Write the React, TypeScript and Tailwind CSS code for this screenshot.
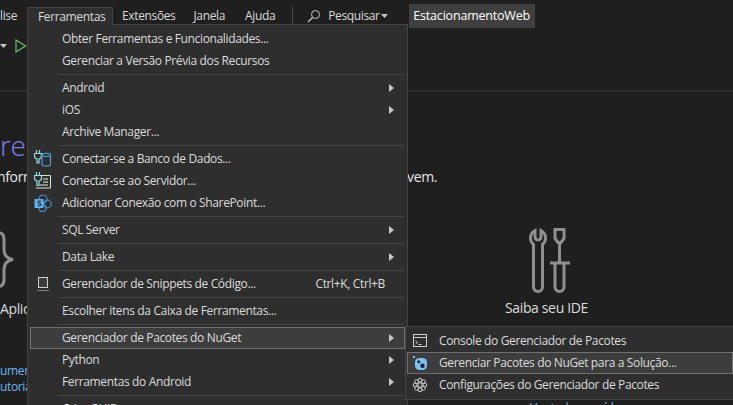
import React from "react";

const Arrow = () => (
  <svg width="5" height="8" viewBox="0 0 5 8" className="absolute right-[11px] top-[7px]">
    <path d="M0 0L5 4L0 8Z" fill="#c8c8c8" />
  </svg>
);

const PlugDb = () => (
  <svg width="18" height="18" viewBox="0 0 18 18" fill="none">
    <path d="M2.500 0v3.500M5.500 0v3.500M0.500 3.500h7V6a3 3 0 0 1-2.500 3v4H3V9A3 3 0 0 1 .5 6z" stroke="#8fe0d8" strokeWidth="1.200" />
    <path d="M8 5c0-2.200 8.500-2.200 8.500 0v9.500c0 2.200-8.500 2.200-8.500 0zM8 5c0 2 8.500 2 8.500 0" stroke="#4f9ddb" strokeWidth="1.200" />
  </svg>
);

const PlugServer = () => (
  <svg width="18" height="18" viewBox="0 0 18 18" fill="none">
    <path d="M2.500 0v3.500M5.500 0v3.500M0.500 3.500h7V6a3 3 0 0 1-2.500 3v4.500H3V9A3 3 0 0 1 .5 6z" stroke="#8fe0d8" strokeWidth="1.200" />
    <path d="M7 3.500h9.500v12.500H2" stroke="#e0e0e0" strokeWidth="1" />
    <path d="M9 7h5M9 10h5M6 13h8" stroke="#e0e0e0" strokeWidth="1" />
    <path d="M12 7h2M12 10h2M12 13h2" stroke="#6cc070" strokeWidth="1" />
  </svg>
);

const SharePoint = () => (
  <svg width="18" height="18" viewBox="0 0 18 18" fill="none">
    <circle cx="9" cy="5" r="4" stroke="#3f8fd0" strokeWidth="1.200" />
    <circle cx="13.500" cy="10" r="3.800" stroke="#3f8fd0" strokeWidth="1.200" />
    <circle cx="8.500" cy="14" r="3.500" stroke="#3f8fd0" strokeWidth="1.200" />
    <rect x="0.500" y="5" width="9" height="9" rx="0.500" fill="#62b0f0" />
    <path d="M7 7.500c-1-.8-3-.6-3 .7 0 1.400 3 .9 3 2.300 0 1.300-2.200 1.400-3.200.6" stroke="#1f2a36" strokeWidth="1.100" />
  </svg>
);

const Snippet = () => (
  <svg width="14" height="16" viewBox="0 0 14 16" fill="none">
    <rect x="2.500" y="1.500" width="9" height="10" fill="#3c3c3c" stroke="#d0d0d0" />
    <path d="M1.500 14.500h11" stroke="#d0d0d0" strokeDasharray="1 1" />
  </svg>
);

const ConsoleIcon = () => (
  <svg width="16" height="16" viewBox="0 0 16 16" fill="none">
    <rect x="1.500" y="1.500" width="13" height="12" stroke="#d0d0d0" />
    <path d="M2 4.500h12" stroke="#d0d0d0" />
    <path d="M3.500 8l2 1.500-2 1.500M6.500 11.500h3" stroke="#d0d0d0" />
  </svg>
);

const NuGetIcon = () => (
  <svg width="16" height="16" viewBox="0 0 16 16">
    <rect x="1" y="1" width="2" height="2" fill="#7cc4f8" />
    <rect x="3" y="3" width="12" height="12" rx="4.500" fill="#7cc4f8" />
    <circle cx="6.800" cy="6.800" r="1.500" fill="#222" />
    <circle cx="10.500" cy="10.800" r="2.200" fill="#222" />
  </svg>
);

const Cog = () => (
  <svg width="16" height="16" viewBox="0 0 16 16" fill="none" stroke="#d0d0d0">
    <circle cx="8" cy="8" r="2.200" />
    <circle cx="8" cy="3.200" r="1.900" />
    <circle cx="8" cy="12.800" r="1.900" />
    <circle cx="3.200" cy="8" r="1.900" />
    <circle cx="12.800" cy="8" r="1.900" />
    <circle cx="4.600" cy="4.600" r="1.900" />
    <circle cx="11.400" cy="4.600" r="1.900" />
    <circle cx="4.600" cy="11.400" r="1.900" />
    <circle cx="11.400" cy="11.400" r="1.900" />
  </svg>
);

const Tools = () => (
  <svg width="44" height="68" viewBox="0 0 44 68" fill="none" stroke="#8f8f8f" strokeWidth="3">
    <path d="M7 3.500a8.500 8.500 0 0 0-1.500 14V60a4.500 4.500 0 0 0 9 0V17.500a8.500 8.500 0 0 0-1.500-14V10a3 3 0 0 1-6 0z" />
    <path d="M27 2.500h9v9l-3 4h-3l-3-4z" />
    <path d="M31.500 15.500V36M22 36h20M27 36v24a4.500 4.500 0 0 0 9 0V36" />
  </svg>
);

const Brace = () => (
  <svg width="16" height="60" viewBox="0 0 16 60" fill="none" stroke="#8f8f8f" strokeWidth="3">
    <path d="M-2 2.500c4 0 6 2 6 7v10c0 6 3 9 9 10-6 1-9 4-9 10v10c0 5-2 7-6 7" />
  </svg>
);

const Row = ({ label, icon, arrow, shortcut, active }: any) => (
  <div
    className={`relative flex h-[22px] items-center whitespace-nowrap text-[#dcdcdc] ${
      active ? "bg-[#3d3d3d] outline outline-1 -outline-offset-1 outline-[#707070]" : ""
    }`}
  >
    <span className="flex w-[25px] shrink-0 items-center justify-center">{icon}</span>
    <span className="pl-[7px]">{label}</span>
    {shortcut && <span className="absolute right-[20px]">{shortcut}</span>}
    {arrow && <Arrow />}
  </div>
);

const Sep = () => (
  <div className="flex h-[5px] items-center pl-[28px] pr-[1px]">
    <div className="h-px w-full bg-[#454545]" />
  </div>
);

export default function App() {
  return (
    <div className="relative h-[405px] w-[733px] overflow-hidden bg-[#1f1f1f] font-['Open_Sans',sans-serif] text-[12px] tracking-[-0.36px] text-[#dcdcdc]">
      {/* barra de menu */}
      <div className="flex h-[32px] items-center">
        <span className="w-[27px]">lise</span>
        <span className="ml-[95px]">Extensões</span>
        <span className="ml-[18px]">Janela</span>
        <span className="ml-[20px]">Ajuda</span>
        <div className="ml-[17px] h-[20px] w-px bg-[#454545]" />
        <svg width="14" height="14" viewBox="0 0 14 14" fill="none" stroke="#c8c8c8" className="ml-[14px]">
          <circle cx="8.500" cy="5.500" r="4" />
          <path d="M5.500 8.500L1 13" strokeWidth="1.300" />
        </svg>
        <span className="ml-[7px]">Pesquisar</span>
        <svg width="7" height="4" viewBox="0 0 7 4" className="ml-[1px]">
          <path d="M0 0h7L3.500 4z" fill="#c8c8c8" />
        </svg>
        <div className="ml-[21px] flex h-[24px] w-[126px] items-center justify-center bg-[#3f3f3f] text-[12.5px] font-medium tracking-[-0.2px] text-white">
          EstacionamentoWeb
        </div>
      </div>

      {/* barra de ferramentas */}
      <div className="flex h-[60px] items-start border-b-2 border-[#2d2d2d] pt-[7px]">
        <svg width="7" height="4" viewBox="0 0 7 4" className="mt-[5px]">
          <path d="M0 0h7L3.500 4z" fill="#c8c8c8" />
        </svg>
        <svg width="12" height="14" viewBox="0 0 12 14" fill="none" className="ml-[8px]">
          <path d="M1 1l9.500 6L1 13z" stroke="#6cc070" strokeWidth="1.200" />
        </svg>
      </div>

      {/* conteúdo atrás do menu */}
      <div className="flex">
        <div className="w-[27px] shrink-0 overflow-hidden whitespace-nowrap">
          <div className="mt-[34px] h-[38px] text-[28px] font-light leading-[38px] text-[#8080f0]">re</div>
          <div className="-ml-[3px] mt-[3px] text-[14px] leading-[20px] text-[#e8e8e8]">nformações</div>
          <div className="mt-[43px] h-[60px]">
            <Brace />
          </div>
          <div className="mt-[9px] text-[14px] leading-[20px]">Aplicativo</div>
          <div className="mt-[44px] leading-[15px] text-[#6fb5f0]">umentação</div>
          <div className="mt-[1px] leading-[15px] text-[#6fb5f0]">utoriais</div>
        </div>
        <div className="ml-[380px] flex flex-col">
          <div className="mt-[75px] text-[14px] leading-[20px] text-[#e8e8e8]">vem.</div>
          <div className="ml-[121px] mt-[40px] w-[44px]">
            <Tools />
          </div>
          <div className="ml-[98px] mt-[3px] whitespace-nowrap text-[14px] leading-[20px]">Saiba seu IDE</div>
          <div className="ml-[123px] mt-[82px] whitespace-nowrap leading-[15px] text-[#6fb5f0]">Ver todos os vídeos</div>
        </div>
      </div>

      {/* menu Ferramentas */}
      <div className="absolute left-[27px] top-[7px] z-10 flex h-[18px] w-[86px] items-center border border-b-0 border-[#454545] bg-[#2e2e2e] pl-[10px]">
        Ferramentas
      </div>
      <div className="absolute left-[27px] top-[24px] w-[381px] border border-[#454545] bg-[#2e2e2e] px-[2px] py-[3px]">
        <Row label="Obter Ferramentas e Funcionalidades..." />
        <Row label="Gerenciar a Versão Prévia dos Recursos" />
        <Sep />
        <Row label="Android" arrow />
        <Row label="iOS" arrow />
        <Row label="Archive Manager..." />
        <Sep />
        <Row label="Conectar-se a Banco de Dados..." icon={<PlugDb />} />
        <Row label="Conectar-se ao Servidor..." icon={<PlugServer />} />
        <Row label="Adicionar Conexão com o SharePoint..." icon={<SharePoint />} />
        <Sep />
        <Row label="SQL Server" arrow />
        <Sep />
        <Row label="Data Lake" arrow />
        <Sep />
        <Row label="Gerenciador de Snippets de Código..." icon={<Snippet />} shortcut="Ctrl+K, Ctrl+B" />
        <Sep />
        <Row label="Escolher itens da Caixa de Ferramentas..." />
        <Sep />
        <Row label="Gerenciador de Pacotes do NuGet" arrow active />
        <Row label="Python" arrow />
        <Row label="Ferramentas do Android" arrow />
        <Sep />
        <Row label="Criar GUID" />
      </div>

      {/* submenu NuGet */}
      <div className="absolute left-[405px] top-[326px] z-20 w-[328px] border border-r-0 border-[#454545] bg-[#2e2e2e] py-[3px] pl-[1px]">
        <Row label="Console do Gerenciador de Pacotes" icon={<ConsoleIcon />} />
        <Row label="Gerenciar Pacotes do NuGet para a Solução..." icon={<NuGetIcon />} active />
        <Row label="Configurações do Gerenciador de Pacotes" icon={<Cog />} />
      </div>
    </div>
  );
}
